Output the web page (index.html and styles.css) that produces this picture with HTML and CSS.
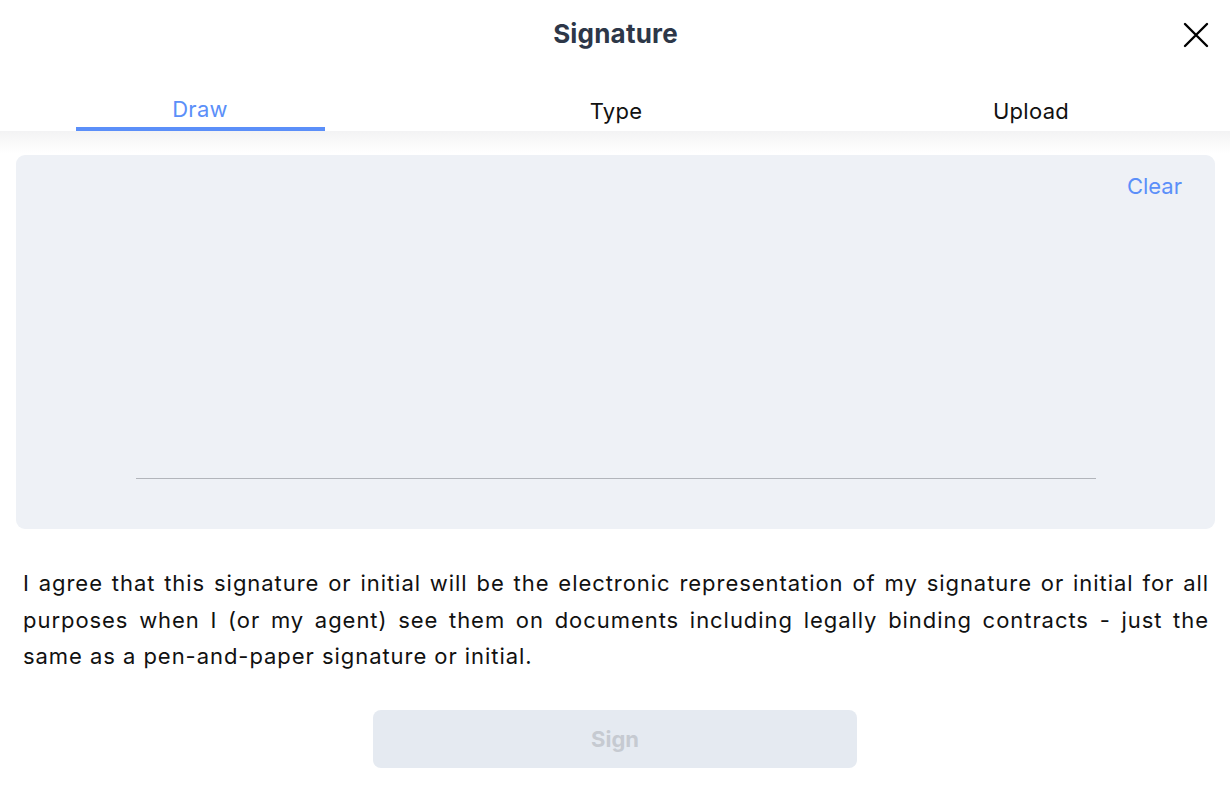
FILE: index.html
```html
<!DOCTYPE html>
<html>
<head>
<meta charset="utf-8">
<link rel="stylesheet" href="styles.css">
</head>
<body>
<div class="modal">
  <header class="header">
    <h1 class="title">Signature</h1>
    <button class="close" aria-label="Close">
      <svg width="26" height="26" viewBox="0 0 26 26"><path d="M2 2 L24 24 M24 2 L2 24" stroke="#000" stroke-width="2.4" stroke-linecap="round" fill="none"/></svg>
    </button>
  </header>
  <nav class="tabs">
    <div class="tab tab-draw active"><span class="tab-label">Draw</span><span class="tab-bar"></span></div>
    <div class="tab tab-type"><span class="tab-label">Type</span></div>
    <div class="tab tab-upload"><span class="tab-label">Upload</span></div>
  </nav>
  <div class="shadow"></div>
  <section class="pad">
    <div class="pad-top"><span class="clear">Clear</span></div>
    <div class="pad-line"></div>
  </section>
  <p class="agree">I agree that this signature or initial will be the electronic representation of my signature or initial for all purposes when I (or my agent) see them on documents including legally binding contracts - just the same as a pen-and-paper signature or initial.</p>
  <div class="actions"><button class="sign" disabled>Sign</button></div>
</div>
</body>
</html>
```
FILE: styles.css
```css
* { box-sizing: border-box; }
html, body { margin: 0; padding: 0; background: #fff; }
body { font-family: Inter, "Noto Sans", sans-serif; color: #111; width: 1230px; height: 788px; overflow: hidden; }
.modal { display: flex; flex-direction: column; }
.header { position: relative; height: 68px; display: flex; justify-content: center; align-items: center; }
.title { margin: 0; font-size: 26px; font-weight: 700; color: #2d3748; line-height: 1; letter-spacing: 0.2px; padding-left: 1px; }
.close { position: absolute; right: 21px; top: 22px; width: 26px; height: 26px; padding: 0; border: 0; background: none; }
.tabs { display: grid; grid-template-columns: 400px 432px 398px; height: 63px; }
.tab { display: flex; flex-direction: column; align-items: center; justify-content: flex-end; font-size: 22px; letter-spacing: 0.3px; }
.tab-label { line-height: 26px; }
.tab-draw .tab-label { color: #5b8ff9; padding-bottom: 5px; }
.tab-bar { width: 249px; height: 4px; background: #5b8ff9; }
.tab:not(.active) .tab-label { padding-bottom: 7px; }
.shadow { height: 22px; background: linear-gradient(#f3f3f4, #fff); }
.pad { margin: 2px 15px 0 16px; height: 374px; background: #eef1f6; border-radius: 9px; display: flex; flex-direction: column; }
.pad-top { display: flex; justify-content: flex-end; padding: 17px 33px 0 0; height: 323px; }
.clear { color: #5b8ff9; font-size: 22px; line-height: 28px; }
.pad-line { margin: 0 119px 0 120px; height: 1px; background: #b2b5bb; }
.agree { margin: 36px 21px 0 23px; font-size: 22px; line-height: 36.5px; letter-spacing: 0.95px; text-align: justify; color: #111; }
.actions { display: flex; justify-content: center; margin-top: 35px; }
.sign { width: 484px; height: 58px; border: 0; border-radius: 8px; background: #e5eaf1; color: #c6cad1; font-family: inherit; font-size: 22px; font-weight: 700; }
```
